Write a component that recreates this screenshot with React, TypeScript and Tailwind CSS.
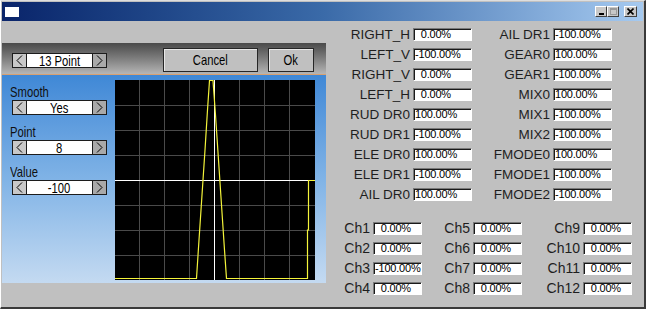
import React from 'react';

const font = "font-['Liberation_Sans',Arial,sans-serif]";

const upperLeft: [string, string][] = [
  ['RIGHT_H', '  0.00%'],
  ['LEFT_V', '-100.00%'],
  ['RIGHT_V', '  0.00%'],
  ['LEFT_H', '  0.00%'],
  ['RUD DR0', '100.00%'],
  ['RUD DR1', '-100.00%'],
  ['ELE DR0', '100.00%'],
  ['ELE DR1', '-100.00%'],
  ['AIL DR0', '100.00%'],
];

const upperRight: [string, string][] = [
  ['AIL DR1', '-100.00%'],
  ['GEAR0', '100.00%'],
  ['GEAR1', '-100.00%'],
  ['MIX0', '100.00%'],
  ['MIX1', '-100.00%'],
  ['MIX2', '-100.00%'],
  ['FMODE0', '100.00%'],
  ['FMODE1', '-100.00%'],
  ['FMODE2', '-100.00%'],
];

const channels: [string, string][][] = [
  [['Ch1', '  0.00%'], ['Ch2', '  0.00%'], ['Ch3', '-100.00%'], ['Ch4', '  0.00%']],
  [['Ch5', '  0.00%'], ['Ch6', '  0.00%'], ['Ch7', '  0.00%'], ['Ch8', '  0.00%']],
  [['Ch9', '  0.00%'], ['Ch10', '  0.00%'], ['Ch11', '  0.00%'], ['Ch12', '  0.00%']],
];

function Field({ value, w }: { value: string; w: string }) {
  return (
    <div
      className={`${w} h-[13px] shrink-0 overflow-hidden whitespace-pre border-t border-l border-t-[#7a7a7a] border-l-[#7a7a7a] border-b border-r border-b-white border-r-white bg-white pl-[1px] text-[11px] leading-[11px] tracking-[-0.2px] text-black shadow-[inset_1px_1px_0_#1a1a1a]`}
    >
      {value}
    </div>
  );
}

function Row({ label, value, lw, fw, size }: { label: string; value: string; lw: string; fw: string; size: string }) {
  return (
    <div className="flex h-[13px] items-center gap-[3px]">
      <div className={`${lw} ${size} whitespace-nowrap text-right leading-[13px] text-[#1e1e1e]`}>{label}</div>
      <Field value={value} w={fw} />
    </div>
  );
}

function Chevron({ dir }: { dir: 'l' | 'r' }) {
  return (
    <svg width="7" height="11" viewBox="0 0 7 11">
      <polyline
        points={dir === 'l' ? '6,0.5 1,5.5 6,10.5' : '1,0.5 6,5.5 1,10.5'}
        fill="none"
        stroke="#000"
        strokeWidth="1"
      />
    </svg>
  );
}

function Spinner({ value }: { value: string }) {
  return (
    <div className="flex h-[15px] w-[95px]">
      <div className="flex w-[15px] items-center justify-center border border-[#1c1c1c] bg-[#c8c8c8]">
        <Chevron dir="l" />
      </div>
      <div className="flex flex-1 items-center justify-center border-y border-[#1c1c1c] bg-white text-[15px] leading-[13px] text-black">
        <span className="inline-block scale-x-75 whitespace-nowrap">{value}</span>
      </div>
      <div className="flex w-[15px] items-center justify-center border border-[#1c1c1c] bg-[#a9a9a9]">
        <Chevron dir="r" />
      </div>
    </div>
  );
}

function Graph() {
  const v = [24.5, 49.5, 74.5, 124.5, 149.5, 174.5];
  const h = [25.5, 50.5, 75.5, 125.5, 150.5, 175.5];
  return (
    <svg width="200" height="200" viewBox="0 0 200 200" className="block bg-black">
      {v.map((x) => (
        <line key={'v' + x} x1={x} y1="0" x2={x} y2="200" stroke="#4a4a4a" strokeWidth="1" />
      ))}
      {h.map((y) => (
        <line key={'h' + y} x1="0" y1={y} x2="200" y2={y} stroke="#4a4a4a" strokeWidth="1" />
      ))}
      <line x1="99.5" y1="0" x2="99.5" y2="200" stroke="#ffffff" strokeWidth="1" />
      <line x1="0" y1="100.5" x2="200" y2="100.5" stroke="#ffffff" strokeWidth="1" />
      <polyline
        points="0,198.5 81.5,198.5 84,160 87,115 90,70 92.5,30 94.5,0.5 98,0.5 100.5,35 103.5,80 106.5,125 109.5,170 111.5,198.5 192.5,198.5 192.5,150 193.5,150 193.5,100.5 200,100.5"
        fill="none"
        stroke="#f4f43a"
        strokeWidth="1.2"
      />
    </svg>
  );
}

export default function App() {
  return (
    <div
      className={`${font} flex h-[309px] w-[646px] flex-col overflow-hidden border-t border-l border-t-[#dedede] border-l-white border-r-2 border-b-2 border-r-[#3a3a3a] border-b-[#3a3a3a] bg-[#c0c0c0] p-[1px]`}
    >
      {/* title bar */}
      <div className="flex h-[19px] shrink-0 items-center bg-gradient-to-r from-[#0a246a] via-[#3a6aa8] to-[#a6caf0] pl-[3px] pr-[6px]">
        <div className="h-[10px] w-[14px] bg-white" />
        <div className="flex-1" />
        <div className="flex h-[11px] w-[12px] items-end justify-center border-t border-l border-t-white border-l-white border-b border-r border-b-[#404040] border-r-[#404040] bg-[#c8c8c8] pb-[1px]">
          <div className="h-[2px] w-[5px] bg-black" />
        </div>
        <div className="flex h-[11px] w-[12px] items-center justify-center border-t border-l border-t-white border-l-white border-b border-r border-b-[#404040] border-r-[#404040] bg-[#c8c8c8]">
          <div className="h-[7px] w-[7px] border border-t-2 border-[#9a9a9a]" />
        </div>
        <div className="ml-[5px] flex h-[11px] w-[13px] items-center justify-center border-t border-l border-t-white border-l-white border-b border-r border-b-[#404040] border-r-[#404040] bg-[#c8c8c8]">
          <svg width="7" height="7" viewBox="0 0 7 7">
            <path d="M0.5 0.5 L6.5 6.5 M6.5 0.5 L0.5 6.5" stroke="#000" strokeWidth="1.6" />
          </svg>
        </div>
      </div>

      <div className="flex flex-1">
        {/* left panel */}
        <div className="mt-[22px] flex w-[324px] flex-col">
          <div className="flex h-[31px] items-start bg-gradient-to-b from-[#4a4a4a] to-[#b6b6b6] pl-[10px]">
            <div className="mt-[10px]">
              <Spinner value="13 Point" />
            </div>
            <button className="ml-[56px] mt-[5px] flex h-[24px] w-[95px] items-center justify-center border border-[#262626] bg-[#c0c0c0] text-[15px] text-black shadow-[inset_1px_1px_0_#e8e8e8]">
              <span className="inline-block scale-x-75">Cancel</span>
            </button>
            <button className="ml-[10px] mt-[5px] flex h-[24px] w-[46px] items-center justify-center border border-[#262626] bg-[#c0c0c0] text-[15px] text-black shadow-[inset_1px_1px_0_#e8e8e8]">
              <span className="inline-block scale-x-75">Ok</span>
            </button>
          </div>
          <div className="h-px bg-[#d8a070]" />
          <div className="flex h-[208px] bg-gradient-to-b from-[#3f88d6] via-[#80b3e6] to-[#c4daf1] pl-[10px] pt-[5px]">
            <div className="flex w-[95px] flex-col gap-[9px] pt-[4px]">
              {[
                ['Smooth', 'Yes'],
                ['Point', '8'],
                ['Value', '-100'],
              ].map(([l, v]) => (
                <div key={l} className="flex flex-col gap-[1px]">
                  <div className="-ml-[2px] h-[15px] text-[15px] leading-[15px] text-[#101010]">
                    <span className="inline-block origin-left scale-x-75">{l}</span>
                  </div>
                  <Spinner value={v} />
                </div>
              ))}
            </div>
            <div className="ml-[8px]">
              <Graph />
            </div>
          </div>
        </div>

        {/* right panel */}
        <div className="flex flex-col pt-[7px]">
          <div className="flex">
            <div className="flex flex-col gap-[7px]">
              {upperLeft.map(([l, v]) => (
                <Row key={l} label={l} value={v} lw="w-[84px]" fw="w-[59px]" size="text-[13.5px]" />
              ))}
            </div>
            <div className="flex flex-col gap-[7px]">
              {upperRight.map(([l, v]) => (
                <Row key={l} label={l} value={v} lw="w-[78px]" fw="w-[59px]" size="text-[13.5px]" />
              ))}
            </div>
          </div>
          <div className="mt-[21px] flex">
            {channels.map((col, i) => (
              <div key={i} className="flex flex-col gap-[7px]">
                {col.map(([l, v]) => (
                  <Row
                    key={l}
                    label={l}
                    value={v}
                    lw={i === 0 ? 'w-[44px]' : i === 1 ? 'w-[48px]' : 'w-[58px]'}
                    fw="w-[49px]"
                    size="text-[14px]"
                  />
                ))}
              </div>
            ))}
          </div>
        </div>
      </div>
    </div>
  );
}
